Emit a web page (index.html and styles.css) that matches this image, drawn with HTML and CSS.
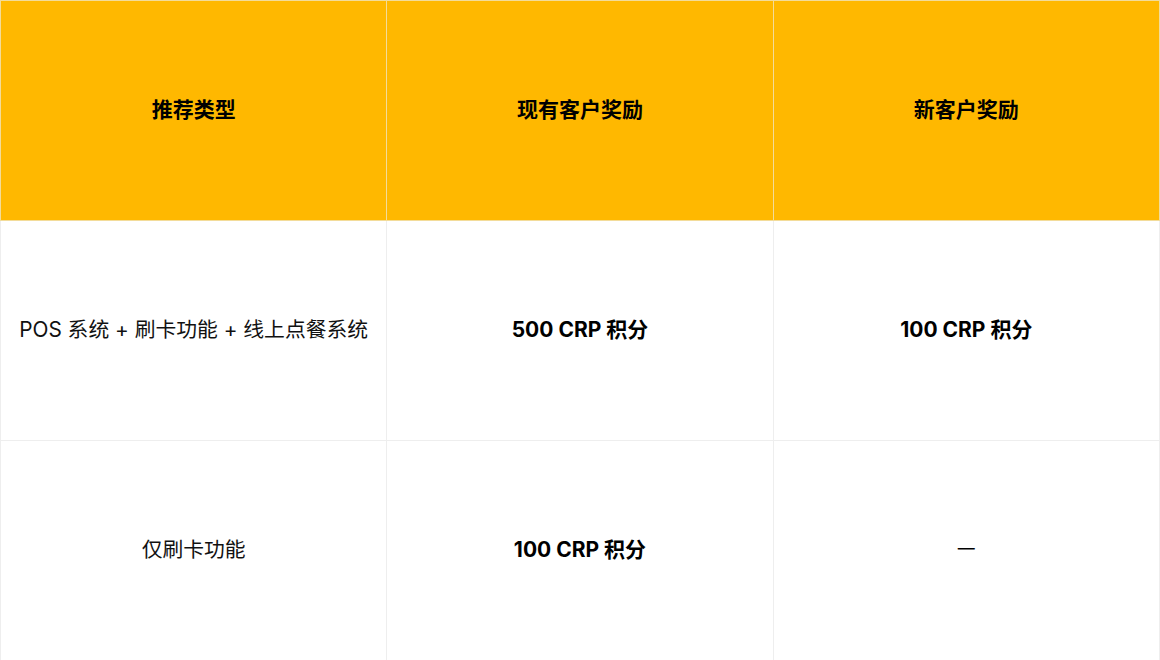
FILE: index.html
```html
<!DOCTYPE html>
<html lang="zh">
<head>
<meta charset="utf-8">
<title>推荐奖励</title>
<link rel="stylesheet" href="styles.css">
</head>
<body>
<table class="rewards">
  <thead>
    <tr>
      <th>推荐类型</th>
      <th>现有客户奖励</th>
      <th>新客户奖励</th>
    </tr>
  </thead>
  <tbody>
    <tr>
      <td class="type">POS 系统 + 刷卡功能 + 线上点餐系统</td>
      <td class="pts">500 CRP 积分</td>
      <td class="pts">100 CRP 积分</td>
    </tr>
    <tr>
      <td class="type">仅刷卡功能</td>
      <td class="pts">100 CRP 积分</td>
      <td class="none">—</td>
    </tr>
  </tbody>
</table>
</body>
</html>
```
FILE: styles.css
```css
html, body {
  margin: 0;
  padding: 0;
  background: #ffffff;
}
body {
  font-family: "Inter", "Noto Sans CJK SC", "Noto Sans", sans-serif;
  color: #111111;
}
.rewards {
  width: 1160px;
  height: 660px;
  border-collapse: collapse;
  table-layout: fixed;
}
.rewards th,
.rewards td {
  height: 213px;
  border: 1px solid #eeeeee;
  text-align: center;
  vertical-align: middle;
  font-size: 21px;
  padding: 0 0 6px 0;
}
.rewards th {
  background: #ffb800;
  font-weight: 700;
  border-color: #f3dc9a;
  color: #000000;
}
.rewards td.type {
  font-weight: 400;
  color: #111111;
  font-size: 20.8px;
}
.rewards td.pts {
  font-weight: 700;
  color: #000000;
}
.rewards td.none {
  font-weight: 400;
  font-size: 17px;
  color: #000000;
}
```
